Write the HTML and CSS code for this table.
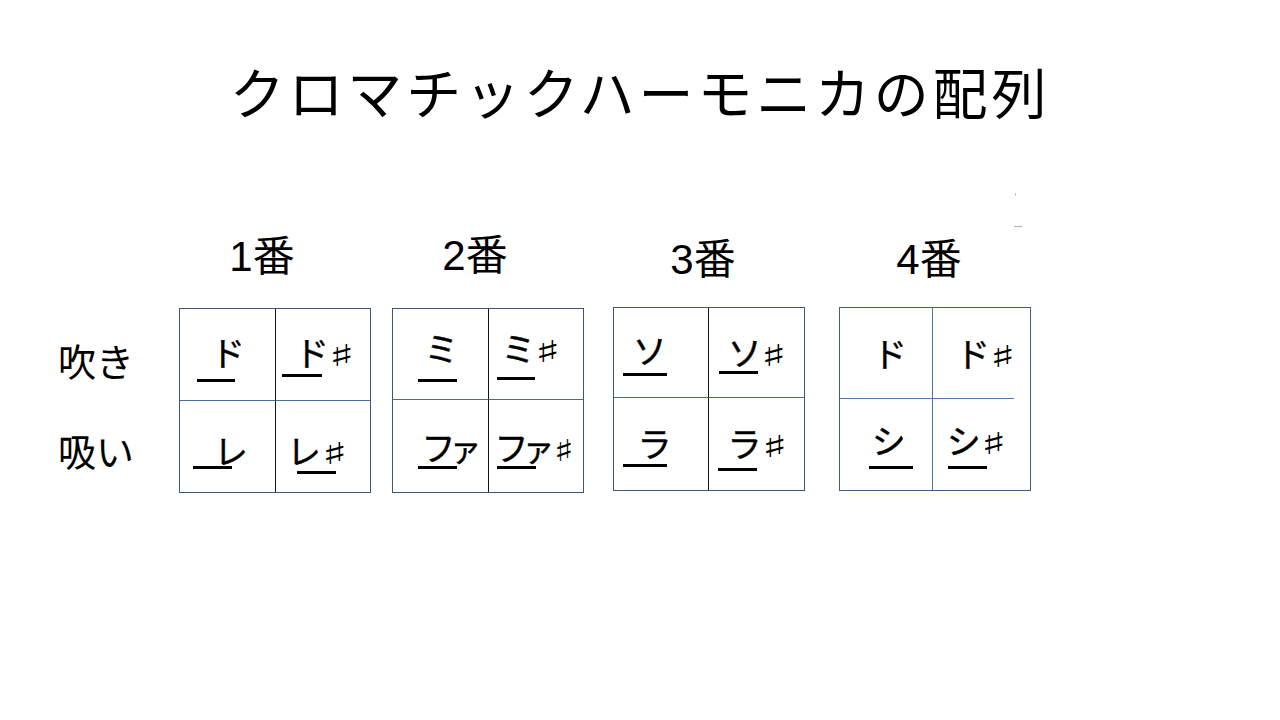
FILE: index.html
```html
<!DOCTYPE html>
<html lang="ja">
<head>
<meta charset="utf-8">
<title>クロマチックハーモニカの配列</title>
<link rel="stylesheet" href="styles.css">
</head>
<body>
<h1 class="title">クロマチックハーモニカの配列</h1>
<div class="stage">
  <div class="rows">
    <div class="rowlabel">吹き</div>
    <div class="rowlabel rowlabel-suck">吸い</div>
  </div>

  <div class="hole hole-1">
    <div class="num">1番</div>
    <div class="grid">
      <div class="cell b1a"><div class="note">ド</div><div class="ul"></div></div>
      <div class="cell b1b"><div class="note">ド<span class="sharp">♯</span></div><div class="ul"></div></div>
      <div class="cell b1c"><div class="note">レ</div><div class="ul"></div></div>
      <div class="cell b1d"><div class="note">レ<span class="sharp">♯</span></div><div class="ul"></div></div>
    </div>
  </div>

  <div class="hole hole-2">
    <div class="num">2番</div>
    <div class="grid">
      <div class="cell b2a"><div class="note">ミ</div><div class="ul"></div></div>
      <div class="cell b2b"><div class="note">ミ<span class="sharp">♯</span></div><div class="ul"></div></div>
      <div class="cell b2c"><div class="note">フ<span class="small">ァ</span></div><div class="ul"></div></div>
      <div class="cell b2d"><div class="note">フ<span class="small">ァ</span><span class="sharp sharp-tight">♯</span></div><div class="ul"></div></div>
    </div>
  </div>

  <div class="hole hole-3">
    <div class="num">3番</div>
    <div class="grid">
      <div class="cell b3a"><div class="note">ソ</div><div class="ul"></div></div>
      <div class="cell b3b"><div class="note">ソ<span class="sharp">♯</span></div><div class="ul"></div></div>
      <div class="cell b3c"><div class="note">ラ</div><div class="ul"></div></div>
      <div class="cell b3d"><div class="note">ラ<span class="sharp">♯</span></div><div class="ul"></div></div>
    </div>
  </div>

  <div class="hole hole-4">
    <div class="num">4番</div>
    <div class="grid">
      <div class="cell b4a"><div class="note">ド</div></div>
      <div class="cell b4b"><div class="note">ド<span class="sharp">♯</span></div></div>
      <div class="cell b4c"><div class="note">シ</div><div class="ul"></div></div>
      <div class="cell b4d"><div class="note">シ<span class="sharp">♯</span></div><div class="ul"></div></div>
    </div>
  </div>
</div>
<span class="speck speck-a"></span>
<span class="speck speck-b"></span>
</body>
</html>
```

FILE: styles.css
```css
html, body {
  margin: 0;
  padding: 0;
  background: #ffffff;
}

body {
  width: 1280px;
  height: 720px;
  overflow: hidden;
  color: #000;
  font-family: "Noto Sans CJK JP", "Noto Sans CJK SC", sans-serif;
}

.title {
  margin: 0;
  padding-top: 60px;
  height: 61px;
  font-size: 55px;
  line-height: 61px;
  font-weight: 400;
  text-align: center;
  letter-spacing: 3.8px;
  white-space: nowrap;
}

.stage {
  display: flex;
  align-items: flex-start;
  margin-top: 115px;
  padding-left: 58px;
}

.rows {
  width: 121px;
  padding-top: 105px;
  display: flex;
  flex-direction: column;
}

.rowlabel {
  font-size: 38px;
  line-height: 38px;
  height: 38px;
  white-space: nowrap;
}

.rowlabel-suck {
  margin-top: 52px;
}

.hole {
  display: flex;
  flex-direction: column;
  align-items: center;
  --frame: #3b5677;
  --hline: #4a6b9d;
  --vline: #141414;
  --col: 96px;
  --row: 92px;
}

.hole-2 { margin-left: 21px; --row: 91px; }
.hole-3 { margin-left: 29px; --col: 95px; --row: 90px; }
.hole-4 { margin-left: 34px; --col: 93px; --row: 91px; --frame: #3f5f8a; --hline: #4d74ad; --vline: #4d74ad; }

.num {
  font-family: "Liberation Sans", "Noto Sans CJK JP", sans-serif;
  font-size: 42px;
  line-height: 42px;
  height: 42px;
  white-space: nowrap;
}

.hole-1 .num { margin-right: 26px; }
.hole-2 .num { margin-right: 26px; margin-top: -1px; margin-bottom: 1px; }
.hole-3 .num { margin-right: 12px; margin-top: 3px; }
.hole-4 .num { margin-right: 12px; margin-top: 3px; }

.grid {
  box-sizing: border-box;
  width: 192px;
  height: 185px;
  margin-top: 30px;
  border: 1px solid var(--frame);
  display: grid;
  grid-template-columns: var(--col) 1fr;
  grid-template-rows: var(--row) 1fr;
}

.hole-3 .grid,
.hole-4 .grid {
  margin-top: 26px;
  height: 184px;
}

.cell {
  box-sizing: border-box;
  min-width: 0;
  display: flex;
  flex-direction: column;
  align-items: flex-start;
}

.cell:nth-child(1) { border-right: 1px solid var(--vline); border-bottom: 1px solid var(--hline); }
.cell:nth-child(2) { border-bottom: 1px solid var(--hline); }
.cell:nth-child(3) { border-right: 1px solid var(--vline); }

.hole-4 .cell:nth-child(2) {
  border-bottom: none;
  background: linear-gradient(var(--hline), var(--hline)) left bottom / calc(100% - 16px) 1px no-repeat;
}

.note {
  margin: calc(var(--ty) - 6px) 0 0 calc(var(--tx) - 3px);
  font-size: 34px;
  line-height: 30px;
  height: 30px;
  white-space: nowrap;
  font-feature-settings: "palt";
  -webkit-text-stroke: 0.4px #000;
}

.small {
  font-size: 32px;
}

.sharp {
  display: inline-block;
  font-family: "DejaVu Sans", sans-serif;
  font-size: 30px;
  line-height: 30px;
  margin-left: 3px;
  margin-right: 10px;
  color: #000;
  transform: scaleX(1.8);
  transform-origin: left center;
  -webkit-text-stroke-width: 0;
  font-feature-settings: normal;
}

.sharp-tight {
  transform: scaleX(1.4);
}

.ul {
  flex: none;
  margin: calc(var(--uy) - var(--ty) - 26px) 0 0 var(--ux);
  width: var(--uw);
  height: 3px;
  background: #000;
}

/* hole 1 */
.b1a { --tx: 38px; --ty: 34px; --ux: 17px; --uy: 72px; --uw: 38px; }
.b1b { --tx: 26px; --ty: 34px; --ux: 6px;  --uy: 67px; --uw: 40px; }
.b1c { --tx: 39px; --ty: 40px; --ux: 13px; --uy: 67px; --uw: 39px; }
.b1d { --tx: 16px; --ty: 40px; --ux: 21px; --uy: 72px; --uw: 39px; }
/* hole 2 */
.b2a { --tx: 37px; --ty: 30px; --ux: 25px; --uy: 72px; --uw: 39px; }
.b2b { --tx: 18px; --ty: 30px; --ux: 8px;  --uy: 70px; --uw: 38px; }
.b2c { --tx: 34px; --ty: 38px; --ux: 25px; --uy: 68px; --uw: 39px; }
.b2d { --tx: 11px; --ty: 38px; --ux: 8px;  --uy: 68px; --uw: 39px; }
/* hole 3 */
.b3a { --tx: 24px; --ty: 33px; --ux: 9px;  --uy: 67px; --uw: 44px; }
.b3b { --tx: 24px; --ty: 35px; --ux: 10px; --uy: 65px; --uw: 39px; }
.b3c { --tx: 29px; --ty: 36px; --ux: 9px;  --uy: 68px; --uw: 44px; }
.b3d { --tx: 24px; --ty: 36px; --ux: 9px;  --uy: 72px; --uw: 39px; }
/* hole 4 */
.b4a { --tx: 40px; --ty: 36px; }
.b4b { --tx: 30px; --ty: 36px; }
.b4c { --tx: 35px; --ty: 32px; --ux: 29px; --uy: 69px; --uw: 44px; }
.b4d { --tx: 17px; --ty: 32px; --ux: 15px; --uy: 69px; --uw: 39px; }

.speck {
  position: absolute;
  display: block;
}

.speck-a {
  left: 1015px;
  top: 193px;
  width: 1px;
  height: 3px;
  background: #b9c6d8;
}

.speck-b {
  left: 1014px;
  top: 226px;
  width: 8px;
  height: 1px;
  background: #9fb3cf;
}
```
